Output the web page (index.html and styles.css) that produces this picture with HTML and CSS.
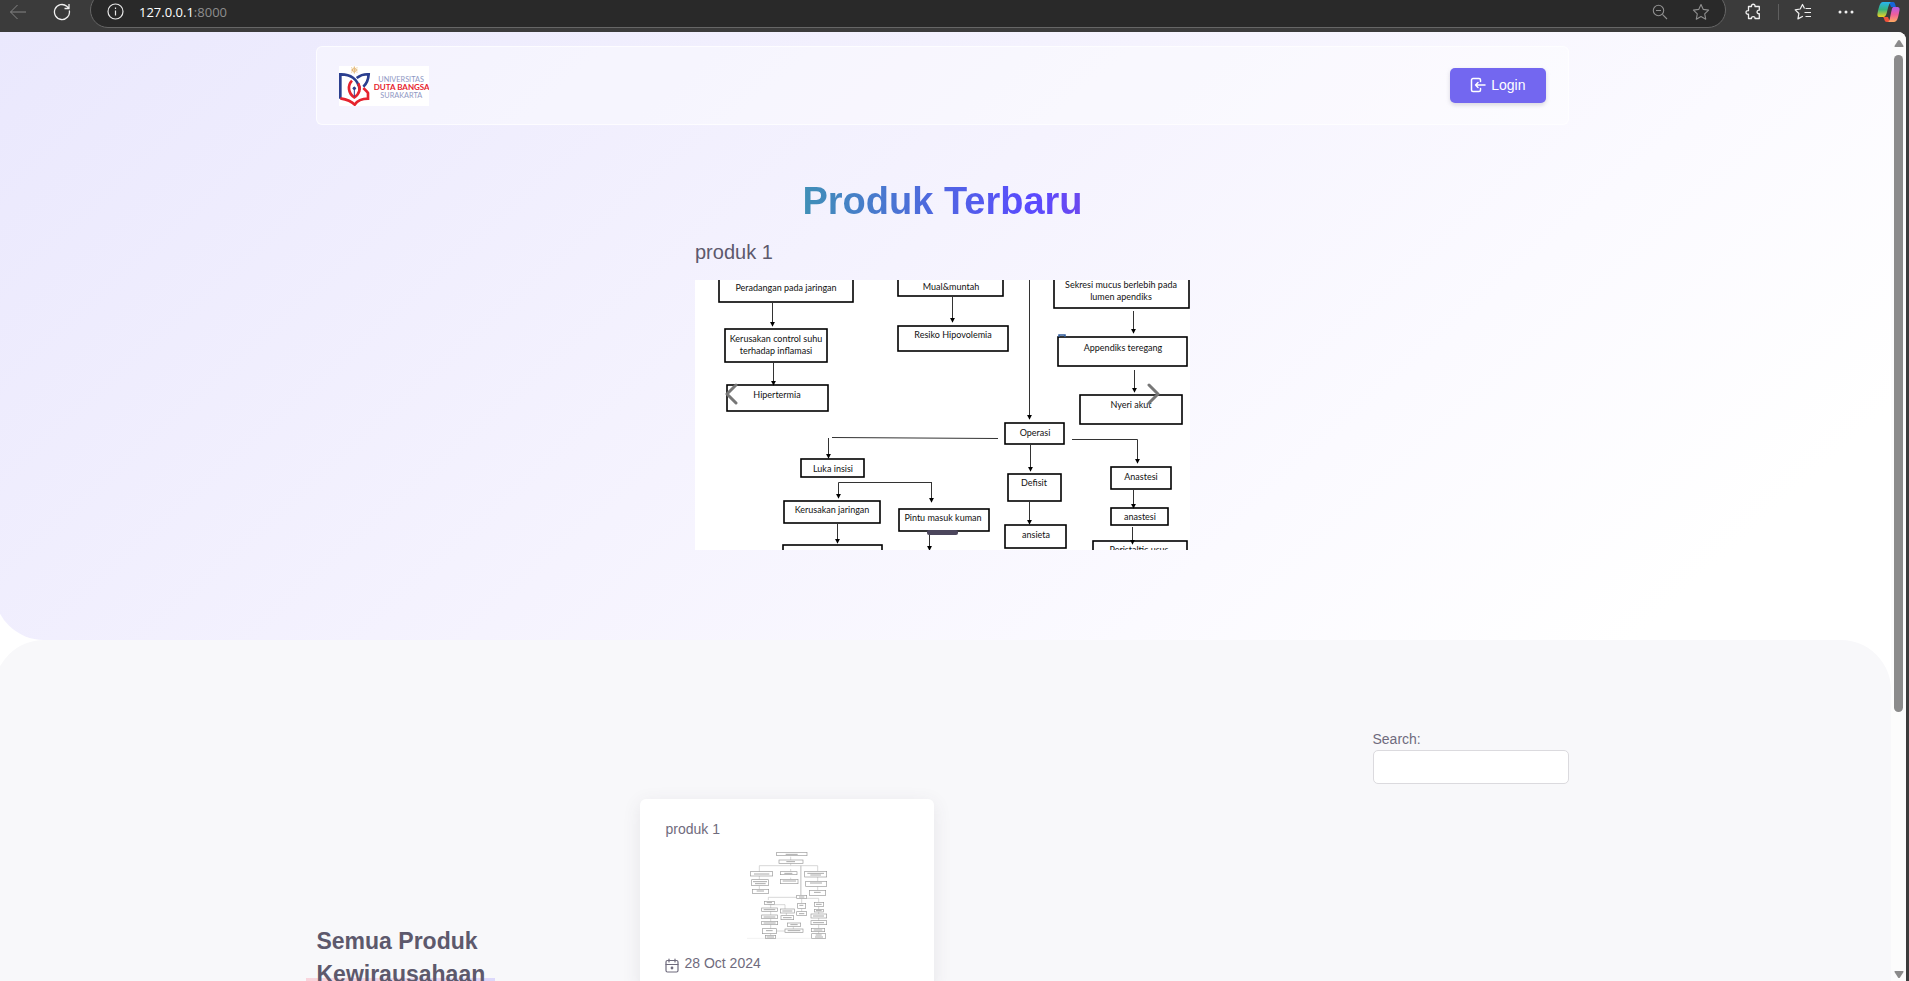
FILE: index.html
```html
<!DOCTYPE html>
<html lang="id">
<head>
<meta charset="utf-8">
<title>Produk Kewirausahaan</title>
<link rel="stylesheet" href="styles.css">
</head>
<body>
<header class="toolbar">
  <button class="tool tool-back" aria-label="Back"><svg width="18" height="16" viewBox="0 0 18 16" fill="none" stroke="#858585"><path d="M17 8H1.500M8.500 1L1.500 8l7 7"/></svg></button>
  <button class="tool tool-reload" aria-label="Reload"><svg width="18" height="18" viewBox="0 0 18 18" fill="none" stroke="#f0f0f0" stroke-width="1.300"><path d="M16.300 7.500A7.500 7.500 0 1 1 13.800 3.300L16 5.400M16 1v4.500h-4.500"/></svg></button>
  <div class="address">
    <svg width="17" height="17" viewBox="0 0 17 17" fill="none" stroke="#e8e8e8" stroke-width="1.200"><circle cx="8.500" cy="8.500" r="7.500"/><path d="M8.500 7.500v5M8.500 4.500v1.400"/></svg>
    <div class="url"><span class="url-host">127.0.0.1</span>:8000</div>
    <button class="tool" aria-label="Zoom"><svg width="16" height="16" viewBox="0 0 16 16" fill="none" stroke="#8f8f8f" stroke-width="1.100"><circle cx="6.500" cy="6.500" r="5.200"/><path d="M4 6.500h5M10.400 10.400L15 15"/></svg></button>
    <button class="tool" aria-label="Favorite"><svg width="18" height="18" viewBox="0 0 18 18" fill="none" stroke="#8f8f8f" stroke-width="1.100" stroke-linejoin="round"><path d="M9 1.500l2.300 4.900 5.300.7-3.900 3.700 1 5.400L9 13.600l-4.700 2.600 1-5.400L1.400 7.100l5.300-.7z"/></svg></button>
  </div>
  <button class="tool tool-ext" aria-label="Extensions"><svg width="17" height="18" viewBox="0 0 17 18" fill="none" stroke="#f0f0f0" stroke-width="1.300" stroke-linejoin="round"><path d="M3.500 3.500h3c-.5-3 4-3 3.500 0h4.300v3.700c-3-.5-3 4 0 3.500v4.800H10c.5-2.500-4-2.500-3.500 0h-3v-4.300c-3.300.5-3.300-4 0-3.500z"/></svg></button>
  <span class="divider"></span>
  <button class="tool tool-fav" aria-label="Favorites"><svg width="18" height="18" viewBox="0 0 18 18" fill="none" stroke="#f0f0f0" stroke-width="1.200" stroke-linejoin="round"><path d="M10.500 5.500L8.500 1.500 6.200 6 1.200 6.800l3.700 3.700-1 5.400 5-2.600M11.500 5.500H17M10.500 9.500H17M11.500 13.500H17"/></svg></button>
  <button class="tool tool-more" aria-label="More"><svg width="16" height="4" viewBox="0 0 16 4" fill="#f0f0f0"><circle cx="2" cy="2" r="1.500"/><circle cx="8" cy="2" r="1.500"/><circle cx="14" cy="2" r="1.500"/></svg></button>
  <button class="tool tool-copilot" aria-label="Copilot"><svg width="23" height="22" viewBox="0 0 23 22">
    <defs>
      <linearGradient id="cpa" x1="0" y1="0" x2="0" y2="1"><stop offset="0" stop-color="#27b4f0"/><stop offset=".5" stop-color="#35b37e"/><stop offset="1" stop-color="#f3d320"/></linearGradient>
      <linearGradient id="cpb" x1="0" y1="0" x2="0" y2="1"><stop offset="0" stop-color="#b45bea"/><stop offset=".5" stop-color="#ef5f9b"/><stop offset="1" stop-color="#ffab60"/></linearGradient>
    </defs>
    <path d="M12 1h4c2 0 2 2 3 5h-5z" fill="#1766d6"/>
    <path d="M6 1h8c-2 1-3 6-4 10-1 4-2 5-4 5H3c-3 0-3-2-2-6C2 6 3 1 6 1z" fill="url(#cpa)"/>
    <path d="M6 16h5l2 5h-3c-3 0-2-3-4-5z" fill="#f0523c"/>
    <path d="M17 6h3c3 0 3 2 2 6-1 5-2 9-5 9h-6c2-1 2-5 3-9s1-6 3-6z" fill="url(#cpb)"/>
  </svg></button>
</header>

<div class="window">
  <main class="page">
    <section class="hero">
      <nav class="navbar container">
        <a class="brand" href="#" aria-label="Universitas Duta Bangsa Surakarta">
          <svg width="90" height="40" viewBox="0 0 270 120" fill="none">
            <rect width="270" height="120" fill="#fff"/>
            <g stroke="#dca34e" stroke-width="2"><circle cx="46" cy="12" r="6"/><path d="M46 1v22M36 12h20M38 4v3M54 4v3M38 17v3M54 17v3"/></g>
            <g stroke="#2b3f8f" stroke-width="8"><path d="M4 98V25C32 24 58 38 62 72"/><path d="M53 36C65 27 78 24 89 25C88 42 84 52 73 62"/></g>
            <g stroke="#e6232e" stroke-width="8"><path d="M73 66c6 6 12 10 14 15v17c-18 0-32 6-40 18C38 106 22 100 4 97"/><path d="M39 44c-14 14-12 38 7 50 16-10 20-28 12-42"/></g>
            <path d="M46 62v30" stroke="#2b3f8f" stroke-width="3"/><circle cx="46" cy="67" r="5" fill="#2b3f8f"/>
            <g class="logo-text"><text x="118" y="49" fill="#8f98c4">UNIVERSITAS</text><text class="logo-bold" x="104" y="72" fill="#e6232e">DUTA BANGSA</text><text x="124" y="95" fill="#8f98c4">SURAKARTA</text></g>
          </svg>
        </a>
        <a class="login" href="#"><svg width="16" height="16" viewBox="0 0 16 16" fill="none" stroke="#fff" stroke-width="1.500" stroke-linecap="round" stroke-linejoin="round"><path d="M10.500 4.500V3A1.500 1.500 0 0 0 9 1.500H3A1.500 1.500 0 0 0 1.500 3v10A1.500 1.500 0 0 0 3 14.500h6a1.500 1.500 0 0 0 1.500-1.500v-1.500M15 8H5.500M8 5.500L5.500 8 8 10.500"/></svg><span>Login</span></a>
      </nav>
      <h1 class="title">Produk Terbaru</h1>
      <div class="carousel">
        <h2 class="slide-name">produk 1</h2>
        <div class="slide">
          <svg class="diagram" viewBox="0 0 495 270">
            <defs><marker id="tip" viewBox="0 0 6 6" refX="5" refY="3" markerWidth="5" markerHeight="5" markerUnits="userSpaceOnUse" orient="auto"><path d="M0 0l6 3-6 3z"/></marker></defs>
            <rect width="495" height="270" fill="#fff"/>
            <g class="boxes">
              <rect x="24" y="-20" width="134" height="42"/><rect x="30" y="49" width="102" height="33"/><rect x="32" y="105" width="101" height="26"/>
              <rect x="203" y="-20" width="105" height="36"/><rect x="203" y="46" width="110" height="25"/>
              <rect x="106" y="179" width="63" height="18"/><rect x="89" y="221" width="96" height="22"/><rect x="88" y="265" width="99" height="22"/>
              <rect x="204" y="229" width="90" height="22"/><rect x="359" y="-20" width="135" height="48"/><rect x="363" y="57" width="129" height="29"/>
              <rect x="385" y="115" width="102" height="29"/><rect x="310" y="143" width="59" height="21"/><rect x="313" y="194" width="53" height="27"/>
              <rect x="310" y="245" width="61" height="23"/><rect x="416" y="187" width="60" height="22"/><rect x="416" y="228" width="57" height="17"/><rect x="398" y="261" width="94" height="22"/>
            </g>
            <g class="arrows">
              <path d="M77.500 22v24"/><path d="M78.500 82v23"/><path d="M257.500 16v26"/><path d="M334.500 0v139"/><path d="M438.500 31v22"/><path d="M439.500 90v22"/>
              <path d="M335.500 164v27"/><path d="M334.500 221v23"/><path d="M377 159.500h65.500V183"/><path d="M438.500 209v19"/><path d="M437.500 247v17"/>
              <path d="M303 158.500L137 157.500"  class="plain"/><path d="M133.500 158v20"/><path d="M236.500 202.500h-93V218"/><path d="M236.500 202v20"/><path d="M142.500 243v20"/><path d="M234.500 251v19"/>
            </g>
            <path d="M364 57v-2h6v2" fill="none" stroke="#2f5b9b" stroke-width="1.500"/>
            <g class="labels">
              <text x="91" y="11">Peradangan pada jaringan</text><text x="81" y="62">Kerusakan control suhu</text><text x="81" y="74">terhadap inflamasi</text><text x="82" y="118">Hipertermia</text>
              <text x="256" y="10">Mual&amp;muntah</text><text x="258" y="58">Resiko Hipovolemia</text><text x="138" y="192">Luka insisi</text><text x="137" y="233">Kerusakan jaringan</text><text x="248" y="241">Pintu masuk kuman</text>
              <text x="426" y="8">Sekresi mucus berlebih pada</text><text x="426" y="20">lumen apendiks</text><text x="428" y="71">Appendiks teregang</text><text x="436" y="128">Nyeri akut</text>
              <text x="340" y="156">Operasi</text><text x="339" y="206">Defisit</text><text x="341" y="258">ansieta</text><text x="446" y="200">Anastesi</text><text x="445" y="240">anastesi</text><text x="444" y="273">Peristaltic usus</text>
            </g>
          </svg>
          <button class="arrow arrow-prev" aria-label="Previous"><svg width="14" height="22" viewBox="0 0 14 22"><path d="M11 2L2 11l9 9"/></svg></button>
          <button class="arrow arrow-next" aria-label="Next"><svg width="14" height="22" viewBox="0 0 14 22"><path d="M3 2l9 9-9 9"/></svg></button>
          <button class="indicator" aria-label="Slide 1"></button>
        </div>
      </div>
    </section>

    <section class="catalog">
      <div class="container">
        <div class="search"><label for="search">Search:</label><input id="search" type="search"></div>
        <div class="products">
          <h2 class="catalog-title">Semua Produk <span class="marked">Kewirausahaan</span></h2>
          <article class="card">
            <h3 class="card-name">produk 1</h3>
            <svg class="thumb" width="80" height="90" viewBox="66 30 240 270">
              <rect x="66" y="30" width="240" height="270" fill="#fff"/>
              <g class="thumb-lines"><path d="M197 50v12M197 70v7M103 97V77h175v17M227 77v88M228 77v88M103 108v10M103 137v11M197 87v7M197 113v5M278 111v13M278 139v12M130 180v-8h85M245 175h36v12M130 194h50v14M137 194v92M230 177v13M230 206v9M281 199v83M154 273h26M205 260v7M184 218v8"/></g>
              <path d="M66 295h195" stroke="#d5d5d5"/>
              <g class="thumb-boxes">
                <rect x="155" y="37" width="91" height="10"/><rect x="162" y="60" width="72" height="10"/><rect x="76" y="95" width="67" height="13"/><rect x="80" y="119" width="50" height="18"/><rect x="82" y="148" width="49" height="12"/>
                <rect x="166" y="95" width="50" height="9"/><rect x="166" y="118" width="53" height="13"/><rect x="239" y="94" width="66" height="17"/><rect x="242" y="124" width="63" height="15"/><rect x="253" y="151" width="49" height="15"/>
                <rect x="215" y="166" width="30" height="9"/><rect x="118" y="184" width="30" height="9"/><rect x="110" y="204" width="47" height="10"/><rect x="110" y="225" width="47" height="11"/><rect x="110" y="244" width="48" height="10"/><rect x="112" y="266" width="42" height="15"/><rect x="121" y="286" width="31" height="9"/>
                <rect x="166" y="207" width="42" height="12"/><rect x="168" y="227" width="38" height="12"/><rect x="187" y="249" width="40" height="10"/><rect x="180" y="267" width="54" height="10"/><rect x="218" y="190" width="24" height="15"/><rect x="215" y="215" width="30" height="11"/>
                <rect x="268" y="187" width="28" height="12"/><rect x="268" y="208" width="27" height="8"/><rect x="258" y="222" width="47" height="12"/><rect x="258" y="242" width="47" height="12"/><rect x="259" y="265" width="40" height="10"/><rect x="260" y="281" width="42" height="14"/>
              </g>
              <path class="thumb-words" d="M182 43h36M184 65h26M87 102h46M84 125h42M90 131h32M95 153h22M178 100h24M173 123h40M247 100h50M256 105h32M255 129h36M267 157h20M222 171h16M125 188h16M116 209h35M116 231h35M116 249h36M123 272h20M125 291h22M172 213h30M174 233h26M196 254h22M188 272h38M223 196h12M222 221h16M273 193h17M273 212h17M264 228h33M264 248h33M266 270h26M272 285h18M270 291h24"/>
            </svg>
            <div class="date"><svg width="14" height="15" viewBox="0 0 14 15" fill="none" stroke="#6f6b7d" stroke-width="1.200" stroke-linecap="round"><rect x="1" y="2.500" width="12" height="11.500" rx="1.500"/><path d="M1 6.500h12M4 1v3M10 1v3"/><circle cx="7" cy="10" r=".8" fill="#6f6b7d"/></svg><time datetime="2024-10-28">28 Oct 2024</time></div>
          </article>
        </div>
      </div>
    </section>
  </main>
  <div class="scrollbar">
    <svg width="10" height="7" viewBox="0 0 10 7" fill="#8b8b8b"><path d="M5 0q.6 0 1 .6L9.500 6q.3 1-.6 1H1.100Q.2 7 .5 6L4 .6Q4.400 0 5 0z"/></svg>
    <div class="thumb-bar"></div>
    <svg width="10" height="7" viewBox="0 0 10 7" fill="#8b8b8b"><path d="M5 7q.6 0 1-.6L9.500 1q.3-1-.6-1H1.100Q.2 0 .5 1L4 6.400Q4.400 7 5 7z"/></svg>
  </div>
</div>
</body>
</html>
```
FILE: styles.css
```css
* { box-sizing: border-box; }
body {
  margin: 0;
  height: 100vh;
  overflow: hidden;
  display: flex;
  flex-direction: column;
  background: #3b3b3b;
  color: #6f6b7d;
  font: 14px/20px "Liberation Sans", Arial, sans-serif;
}
h1, h2, h3 { margin: 0; font-weight: 400; }
button { padding: 0; border: 0; background: none; }
svg { display: block; flex: none; }

.toolbar {
  flex: none;
  display: flex;
  align-items: center;
  height: 32px;
  padding: 0 9px 8px;
}
.tool-reload { margin-left: 26px; }
.address {
  flex: 1;
  display: flex;
  align-items: center;
  gap: 24px;
  height: 36px;
  margin: -5px 19px 0 19px;
  padding: 4px 15px 0 16px;
  border: 1px solid #666;
  border-radius: 18px;
  background: #292929;
}
.url {
  flex: 1;
  margin-left: -9px;
  color: #8e8e8e;
  font: 13px/18px "Open Sans", "Noto Sans", sans-serif;
}
.url-host { color: #fff; }
.divider { width: 1px; height: 16px; margin: 0 15px 0 16px; background: #5f5f5f; }
.tool-more { margin: 0 23px 0 26px; }

.window {
  flex: 1;
  min-height: 0;
  display: flex;
  margin-right: 3px;
  border-radius: 0 8px 0 0;
  overflow: hidden;
  background: #fff;
}
.page { flex: 1; min-width: 0; margin-left: -6px; }
.container { width: 66%; margin: 0 auto; }

.hero {
  padding: 14px 0 90px;
  border-radius: 0 0 50px 50px;
  background: linear-gradient(138deg, #eae8fd 0%, #f5f3fe 45%, #fbfaff 70%, #fff 90%);
}
.navbar {
  display: flex;
  align-items: center;
  justify-content: space-between;
  padding: 19px 22px 18px;
  border: 1px solid rgba(255, 255, 255, .7);
  border-radius: 6px;
  background: rgba(255, 255, 255, .4);
}
.logo-text { font: 400 22px Lato, sans-serif; }
.logo-bold { font-weight: 700; font-size: 24px; }
.login {
  display: flex;
  align-items: center;
  gap: 5px;
  height: 35px;
  margin-bottom: 2px;
  padding: 0 20px;
  border-radius: 5px;
  background: #7367f0;
  box-shadow: 0 2px 4px rgba(165, 163, 174, .4);
  color: #fff;
  text-decoration: none;
}
.title {
  width: fit-content;
  margin: 53px auto 14px;
  font-size: 38px;
  font-weight: 700;
  line-height: 46px;
  color: transparent;
  background: linear-gradient(to right, #4090b6, #5a4aff 82%, #6c48ee);
  background-clip: text;
}
.carousel { width: 495px; margin: 0 auto; }
.slide-name { margin-bottom: 14px; font-size: 20px; line-height: 28px; color: #5d596c; }
.slide { position: relative; }
.diagram { width: 100%; height: auto; }
.boxes { fill: none; stroke: #000; stroke-width: 1.600; }
.arrows { fill: none; stroke: #333; stroke-width: 1; }
.arrows path { marker-end: url(#tip); }
.arrows .plain { marker-end: none; }
.labels { font: 9px Lato, "Open Sans", sans-serif; text-anchor: middle; fill: #111; }
.arrow {
  position: absolute;
  top: 0;
  bottom: 42px;
  width: 15%;
  display: flex;
  align-items: center;
  justify-content: center;
}
.arrow-prev { left: 0; }
.arrow-next { right: 0; }
.arrow path { fill: none; stroke: #777; stroke-width: 3; stroke-linecap: round; stroke-linejoin: round; }
.indicator {
  position: absolute;
  bottom: 15px;
  left: 50%;
  width: 31px;
  height: 5px;
  margin-left: -16px;
  border-radius: 2px;
  background: #4b465c;
}

.catalog {
  padding: 89px 0 60px;
  border-radius: 50px 50px 0 0;
  background: #f8f8fa;
}
.search {
  display: flex;
  flex-direction: column;
  gap: 1px;
  width: 196px;
  margin: 0 0 15px auto;
}
.search input {
  height: 34px;
  padding: 0 12px;
  border: 1px solid #dbdade;
  border-radius: 5px;
  background: #fff;
  font: inherit;
  color: inherit;
}
.products {
  display: grid;
  grid-template-columns: 294px 294px;
  column-gap: 30px;
}
.catalog-title {
  margin-top: 126px;
  font-size: 23px;
  font-weight: 700;
  line-height: 33px;
  color: #5d596c;
}
.marked {
  display: table;
  margin-left: -10px;
  padding: 0 10px;
  background: linear-gradient(to right, #f9d5dc, #dcd9fb) 0 20px / 100% 8px no-repeat;
}
.card {
  padding: 20px 25px;
  border-radius: 6px;
  background: #fff;
  box-shadow: 0 4px 18px rgba(75, 70, 92, .1);
}
.card-name { font-size: 14px; }
.thumb { margin: 11px auto 13px; }
.thumb-lines { fill: none; stroke: #c4c4c4; stroke-width: 2; }
.thumb-boxes { fill: #fff; stroke: #999; stroke-width: 2; }
.thumb-words { fill: none; stroke: #aaa; stroke-width: 3; }
.date { display: flex; align-items: center; gap: 5px; }
.date svg { margin-top: 4px; }

.scrollbar {
  flex: none;
  width: 15px;
  display: flex;
  flex-direction: column;
  align-items: center;
  padding: 8px 0 3px;
  background: #fcfcfc;
}
.thumb-bar {
  width: 9px;
  margin: 8px 0 auto;
  flex: 0 1 657px;
  border-radius: 5px;
  background: #8b8b8b;
}
```
